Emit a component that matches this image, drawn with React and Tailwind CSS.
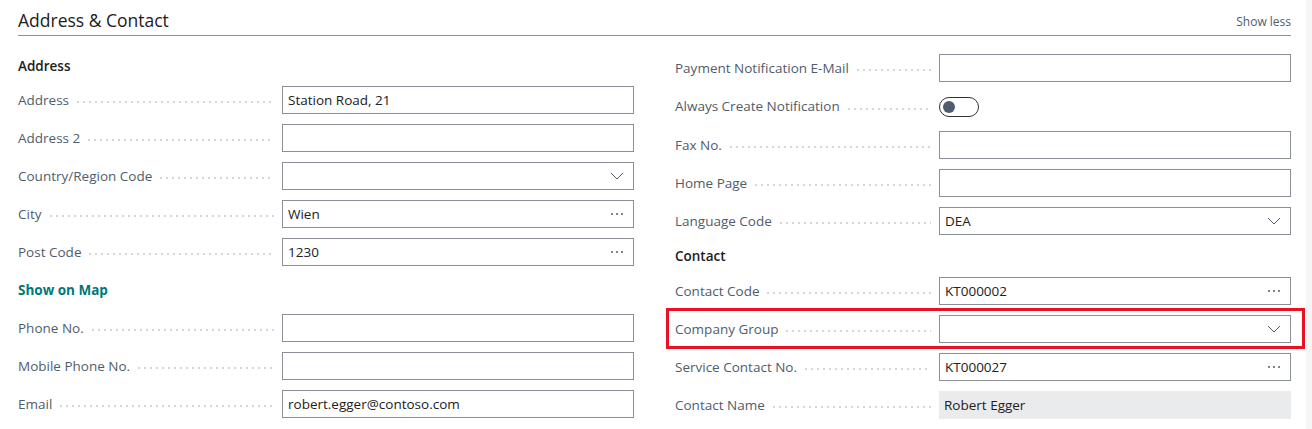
import React from 'react';

const Dots = () => (
    <div className="flex-1 mx-[8px] mt-[4px] h-[2px] bg-[linear-gradient(to_right,#d6d6d6_2px,transparent_2px)] bg-[length:6px_2px] bg-repeat-x" />
);

const Chevron = () => (
    <svg width="14" height="8" viewBox="0 0 14 8" className="shrink-0">
        <polyline points="1,1 7,7 13,1" fill="none" stroke="#505c6d" strokeWidth="1" />
    </svg>
);

const Ellipsis = () => (
    <svg width="14" height="4" viewBox="0 0 14 4" className="shrink-0">
        <circle cx="2" cy="2" r="1" fill="#505c6d" />
        <circle cx="7" cy="2" r="1" fill="#505c6d" />
        <circle cx="12" cy="2" r="1" fill="#505c6d" />
    </svg>
);

const Field = ({ label, value, kind, readOnly, height = 'h-[38px]', highlight }) => (
    <div className={`relative flex items-center ${height}`}>
        {highlight && (
            <div className="absolute -left-[9px] -right-[14px] top-[-2px] bottom-[-1px] border-[3px] border-[#e81123] pointer-events-none" />
        )}
        <span className="text-[13.5px] text-[#505c6d] whitespace-nowrap">{label}</span>
        <Dots />
        {kind === 'toggle' ? (
            <div className="w-[352px] shrink-0 flex items-center">
                <div className="w-[40px] h-[20px] rounded-full border border-[#323130] flex items-center px-[3px]">
                    <div className="w-[12px] h-[12px] rounded-full bg-[#505c6d]" />
                </div>
            </div>
        ) : (
            <div
                className={`w-[352px] h-[28px] shrink-0 flex items-center justify-between pl-[5px] pr-[9px] text-[13.5px] text-[#212121] ${
                    readOnly ? 'bg-[#eaebec]' : 'border border-[#8a8f98] bg-white'
                }`}
            >
                <span className="whitespace-nowrap">{value}</span>
                {kind === 'select' && <Chevron />}
                {kind === 'lookup' && <Ellipsis />}
            </div>
        )}
    </div>
);

const Heading = ({ children, height }) => (
    <div className={`flex items-center ${height} text-[13.5px] font-semibold text-[#212121]`}>{children}</div>
);

export default function App() {
    return (
        <div className="relative w-[1312px] h-[429px] bg-white overflow-hidden" style={{ fontFamily: '"Segoe UI", "Open Sans", sans-serif' }}>
            <div className="absolute right-0 top-0 bottom-0 w-[6px] bg-[#f5f5f5]" />
            <div className="pl-[18px] pr-[21px]">
                {/* Header */}
                <div className="flex items-center justify-between h-[36px] pt-[5px] border-b border-[#8a8f98]">
                    <span className="text-[17.5px] text-[#212121]">Address &amp; Contact</span>
                    <span className="text-[12px] text-[#505c6d] pt-[3px]">Show less</span>
                </div>

                <div className="grid grid-cols-[616px_616px] gap-x-[41px]">
                    {/* Left column */}
                    <div className="pt-[15px]">
                        <Heading height="h-[30px]">Address</Heading>
                        <Field label="Address" value="Station Road, 21" />
                        <Field label="Address 2" value="" />
                        <Field label="Country/Region Code" value="" kind="select" />
                        <Field label="City" value="Wien" kind="lookup" />
                        <Field label="Post Code" value="1230" kind="lookup" />
                        <div className="flex items-center h-[38px] text-[13.5px] font-bold text-[#00777a]">Show on Map</div>
                        <Field label="Phone No." value="" />
                        <Field label="Mobile Phone No." value="" />
                        <Field label="Email" value="robert.egger@contoso.com" />
                    </div>

                    {/* Right column */}
                    <div className="pt-[13px]">
                        <Field label="Payment Notification E-Mail" value="" />
                        <Field label="Always Create Notification" kind="toggle" height="h-[39px]" />
                        <Field label="Fax No." value="" />
                        <Field label="Home Page" value="" />
                        <Field label="Language Code" value="DEA" kind="select" />
                        <Heading height="h-[32px]">Contact</Heading>
                        <Field label="Contact Code" value="KT000002" kind="lookup" />
                        <Field label="Company Group" value="" kind="select" highlight />
                        <Field label="Service Contact No." value="KT000027" kind="lookup" />
                        <Field label="Contact Name" value="Robert Egger" readOnly />
                    </div>
                </div>
            </div>
        </div>
    );
}
